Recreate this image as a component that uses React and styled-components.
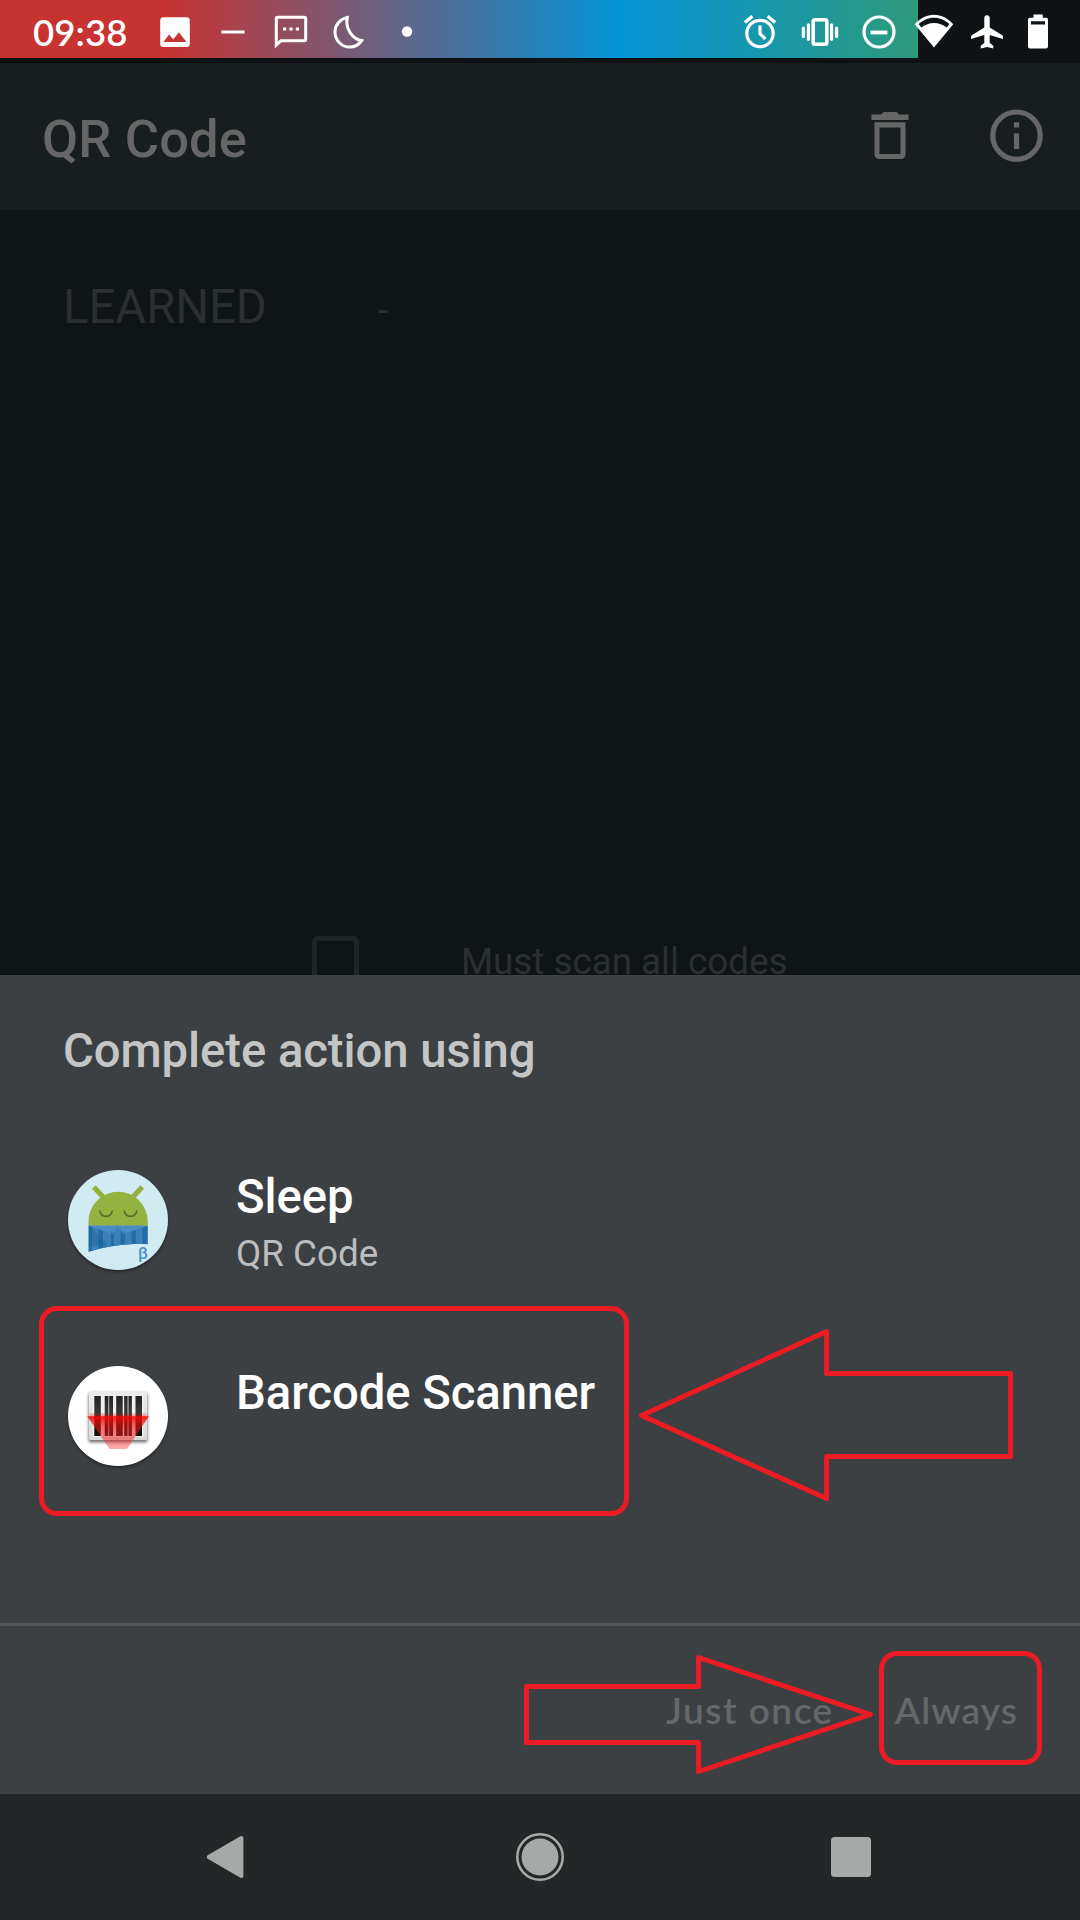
import React from 'react';
import styled, { createGlobalStyle } from 'styled-components';

const RED = '#ed1c24';

const GlobalStyle = createGlobalStyle`
  * { box-sizing: border-box; }
  body {
    margin: 0;
    background: #0f1417;
    font-family: Roboto, "Noto Sans", sans-serif;
  }
`;

const Screen = styled.div`
  position: relative;
  display: flex;
  flex-direction: column;
  width: 1080px;
  height: 1920px;
  overflow: hidden;
  background: #0f1417;
`;

const StatusBar = styled.header`
  display: flex;
  align-items: flex-start;
  height: 63px;
  color: #fff;
  background: linear-gradient(90deg, #c73331 165px, #0494d9 619px, #2d9a7b 918px) 0 0 / 918px 58px no-repeat #0f1214;
`;

const Clock = styled.time`
  width: 146px;
  padding-left: 33px;
  font: 600 36.5px/64px Lato, sans-serif;
  letter-spacing: 0.1px;
`;

const StatusGroup = styled.div`
  display: flex;
  margin-left: ${(p) => (p.$end ? 'auto' : '0')};
  padding-right: ${(p) => (p.$end ? '19.75px' : '0')};
`;

const Slot = styled.span`
  display: flex;
  align-items: center;
  justify-content: center;
  width: ${(p) => p.$w}px;
  height: 63px;
`;

const Glyph = styled.svg`
  display: block;
  flex: none;
  width: ${(p) => p.$w || 40}px;
  height: ${(p) => p.$h || p.$w || 40}px;
  overflow: visible;
`;

const AppBar = styled.div`
  display: flex;
  align-items: center;
  height: 147px;
  padding: 4px 37px 0 42px;
  color: #666;
  background: #181d20;
`;

const Title = styled.h1`
  flex: 1;
  margin: 0;
  font-size: 52.5px;
  font-weight: 500;
  line-height: 62px;
  letter-spacing: 0.15px;
`;

const Actions = styled.div`
  display: flex;
  gap: 81px;
  padding-bottom: 6px;
`;

const Body = styled.main`
  height: 765px;
  padding-top: 69px;
  overflow: hidden;
  color: #2b2f32;
`;

const LearnedRow = styled.div`
  display: flex;
  align-items: baseline;
  height: 56px;
  padding-left: 63px;
`;

const Learned = styled.span`
  width: 315px;
  font-size: 47.25px;
  line-height: 56px;
`;

const Small = styled.span`
  font-size: 36.75px;
  line-height: 44px;
`;

const CheckRow = styled.label`
  display: flex;
  gap: 102px;
  margin-top: 601px;
  padding-left: 312px;
`;

const CheckBox = styled.span`
  width: 47px;
  height: 48px;
  border: 5px solid #1f2427;
  border-radius: 6px;
`;

const CheckLabel = styled(Small)`
  padding-top: 4px;
`;

const Sheet = styled.section`
  display: flex;
  flex-direction: column;
  height: 819px;
  padding-top: 48px;
  background: #3d4043;
`;

const SheetTitle = styled.h2`
  margin: 0 0 43px 63px;
  color: #c4c5c5;
  font-size: 47.25px;
  font-weight: 500;
  line-height: 56px;
  letter-spacing: -0.07px;
`;

const AppRow = styled.div`
  display: flex;
  gap: 68px;
  height: 196px;
  padding: 47px 0 0 68px;
`;

const AppIcon = styled.div`
  width: 100px;
  height: 100px;
  margin-top: 1px;
  border-radius: 50%;
  overflow: hidden;
  background: ${(p) => p.$bg};
  box-shadow: 0 2px 3px rgba(0, 0, 0, 0.4);
`;

const AppText = styled.div`
  display: flex;
  flex-direction: column;
  gap: 7px;
`;

const AppName = styled.span`
  color: #fff;
  font-size: 47.25px;
  font-weight: 500;
  line-height: 56px;
  letter-spacing: -0.07px;
`;

const AppDetail = styled(Small)`
  color: #bcbdbf;
`;

const SheetFooter = styled.div`
  display: flex;
  justify-content: flex-end;
  gap: 61px;
  height: 171px;
  margin-top: auto;
  padding: 61px 62px 0 0;
  border-top: 3px solid #53575b;
`;

const TextButton = styled.button`
  height: 44px;
  padding: 0;
  border: 0;
  background: none;
  color: #64686b;
  font: 600 37px/45px Lato, sans-serif;
  letter-spacing: ${(p) => p.$track}px;
`;

const NavBar = styled.nav`
  display: flex;
  align-items: center;
  justify-content: space-between;
  height: 126px;
  padding: 0 205px;
  background: #242728;
  color: #a7a9a8;
`;

const MarkBox = styled.div`
  position: absolute;
  left: ${(p) => p.$x}px;
  top: ${(p) => p.$y}px;
  width: ${(p) => p.$w}px;
  height: ${(p) => p.$h}px;
  border: 5px solid ${RED};
  border-radius: 18px;
`;

const MarkArrow = styled.svg`
  position: absolute;
  left: ${(p) => p.$x}px;
  top: ${(p) => p.$y}px;
  fill: none;
  stroke: ${RED};
  stroke-width: 5;
  stroke-linejoin: round;
`;

/* Status glyphs use a 40px box whose centre is (20, 20). */
const ImageGlyph = () => (
  <Glyph viewBox="0 0 40 40">
    <path fill="currentColor" fillRule="evenodd" d="M8.500 5.200h23a3.300 3.300 0 0 1 3.300 3.300v23.200a3.300 3.300 0 0 1-3.300 3.300h-23a3.300 3.300 0 0 1-3.300-3.300V8.500a3.300 3.300 0 0 1 3.300-3.300zM8.500 30h23l-7.600-9.800-5.700 7.300-4.100-5z" />
  </Glyph>
);
const DashGlyph = () => (
  <Glyph viewBox="0 0 40 40"><rect x="8.400" y="18.500" width="23.200" height="3" fill="currentColor" /></Glyph>
);
const SmsGlyph = () => (
  <Glyph viewBox="0 0 40 40">
    <path fill="currentColor" fillRule="evenodd" d="M6.800 3.700h26.400a3 3 0 0 1 3 3v20.500a3 3 0 0 1-3 3H10.500L3.800 36.500V6.700a3 3 0 0 1 3-3zM6.800 6.700V29.500L9.500 27.200H33.200V6.700z" />
    <path fill="currentColor" d="M12 15.400h3.200v3.200H12zM18.400 15.400h3.200v3.200h-3.200zM24.800 15.400H28v3.200h-3.200z" />
  </Glyph>
);
const MoonGlyph = () => (
  <Glyph viewBox="0 0 40 40">
    <path fill="none" stroke="currentColor" strokeWidth="3" strokeLinejoin="miter" d="M18.300 5.400C10.800 7.200 6 13 6 20c0 8.500 6.700 15 14.800 15 5 0 9.300-2.600 11.800-6.400C23.500 27 15.800 16.500 18.300 5.400z" />
  </Glyph>
);
const DotGlyph = () => (
  <Glyph viewBox="0 0 40 40"><circle cx="20" cy="19.500" r="5.200" fill="currentColor" /></Glyph>
);
const AlarmGlyph = () => (
  <Glyph viewBox="0 0 40 40" fill="none" stroke="currentColor" strokeWidth="3.200">
    <circle cx="20" cy="21.500" r="13.200" />
    <path d="M20 13.500v8.300l5.400 5.200" />
    <path d="M4.900 10.500l7.500-6.300M27.600 4.200l7.500 6.300" strokeWidth="3.400" />
  </Glyph>
);
const VibrateGlyph = () => (
  <Glyph viewBox="0 0 40 40">
    <rect x="13.200" y="7.700" width="13.600" height="24.600" rx="1.800" fill="none" stroke="currentColor" strokeWidth="3.600" />
    <path stroke="currentColor" strokeWidth="3.200" strokeLinecap="round" d="M3.400 16v8.500M8.400 12.800v14.500M31.600 12.800v14.500M36.600 16v8.500" />
  </Glyph>
);
const DndGlyph = () => (
  <Glyph viewBox="0 0 40 40" fill="none" stroke="currentColor">
    <circle cx="20" cy="20" r="15" strokeWidth="3.200" />
    <path d="M11.600 20.500h16.800" strokeWidth="3.800" />
  </Glyph>
);
const WifiGlyph = () => (
  <Glyph viewBox="0 0 40 40">
    <path fill="currentColor" fillRule="evenodd" d="M20 35.500L.8 12.200C6 6.500 12.500 2.800 20 2.800s14 3.700 19.200 9.400zM20 5.700c-6 0-11.200 2.600-15.400 6.400l2.700 3.300C11.200 12.500 15.300 10.900 20 10.900s8.800 1.600 12.700 4.500l2.700-3.300C31.200 8.300 26 5.700 20 5.700z" />
  </Glyph>
);
const PlaneGlyph = () => (
  <Glyph viewBox="0 0 40 40">
    <path fill="currentColor" d="M20 3.300c1.700 0 2.700 1.300 2.700 3v9.200l12.500 7.800c.5.300.8.900.8 1.500v2.200l-13.300-4V31l3 2.200c.4.300.6.700.6 1.200V36.500L20 35l-6.300 1.500v-2.100c0-.5.200-.9.600-1.200l3-2.200v-8L4 27v-2.200c0-.6.300-1.200.8-1.500l12.500-7.800V6.300c0-1.700 1-3 2.700-3z" />
  </Glyph>
);
const BatteryGlyph = () => (
  <Glyph viewBox="0 0 40 40">
    <path fill="currentColor" fillRule="evenodd" d="M15.500 2.500h9.200v3.200h3.300a2 2 0 0 1 2 2v26.800a2 2 0 0 1-2 2H12a2 2 0 0 1-2-2V7.700a2 2 0 0 1 2-2h3.500zM13 9.200v3.400h14V9.200z" />
  </Glyph>
);

const TrashIcon = () => (
  <Glyph $w={38} $h={54} viewBox="0 0 38 54">
    <path fill="currentColor" fillRule="evenodd" d="M10 5.500L12.800 3h12.500L28 5.500h9.500v5.500H.5V5.500zM3.500 13.300h31v32.200a4.500 4.500 0 0 1-4.500 4.500H8a4.500 4.500 0 0 1-4.500-4.500zM8.500 18.500v26.400h21V18.500z" />
  </Glyph>
);
const InfoIcon = () => (
  <Glyph $w={53} $h={54} viewBox="0 0 53 54">
    <circle cx="26.500" cy="26.700" r="23.700" fill="none" stroke="currentColor" strokeWidth="5.200" />
    <path fill="currentColor" d="M23.900 13.200h5.200v5.300h-5.200zM23.900 24.200h5.200v15.700h-5.200z" />
  </Glyph>
);

const STRIPES = [28, 39, 50, 61, 72];

const SleepLogo = () => (
  <Glyph $w={100} viewBox="0 0 100 100">
    <defs>
      <clipPath id="blanket"><path d="M20.500 55.700h59.300v18.500C59 73.500 39 76 20.500 82z" /></clipPath>
    </defs>
    <path d="M25.800 17l10 10.800M74.200 17l-10 10.800" stroke="#93b13f" strokeWidth="5" />
    <path d="M20.500 55.700V51.500a29.650 29.650 0 0 1 59.300 0v4.200z" fill="#94b23f" />
    <g fill="none" stroke="#56692a" strokeWidth="1.500">
      <path d="M31.500 40.500c2 7.800 11 7.800 13 0M56 40.500c2 7.800 11 7.800 13 0" />
    </g>
    <g clipPath="url(#blanket)">
      <rect x="20" y="55" width="60" height="28" fill="#226ca8" />
      {STRIPES.map((x, i) => (
        <rect key={x} x={x - 4} y="55" width={i === 1 ? 8 : 6.5} height="28" fill="#3a80b9" />
      ))}
      <path d="M22 55.700L40 76H20.500z" fill="#1f6296" opacity=".45" />
      <path d="M20.500 55.700h59.300L55.500 64 50 56.500 44.500 64z" fill="#4b8dc3" />
      <circle cx="43.700" cy="62" r=".8" fill="#25659b" /><circle cx="56.300" cy="62" r=".8" fill="#25659b" />
    </g>
    <text x="70" y="88.500" fontFamily="Roboto, sans-serif" fontSize="16.500" fontWeight="500" fill="#4b8fc4">β</text>
  </Glyph>
);

const BARS = [
  [26.3, 6.500], [36.8, 3.200], [41.3, 3.700], [48.2, 6.500], [56.3, 3], [60.8, 3], [67.5, 6.500],
];

const BarcodeLogo = () => (
  <Glyph $w={100} viewBox="0 0 100 100">
    <defs>
      <linearGradient id="plate" x1="0" y1="0" x2="0" y2="1">
        <stop offset="0" stopColor="#ebebeb" /><stop offset="1" stopColor="#d8d8d8" />
      </linearGradient>
      <linearGradient id="bar" x1="0" y1="0" x2="0" y2="1">
        <stop offset="0" stopColor="#222" /><stop offset=".4" stopColor="#3a3a3a" /><stop offset=".5" stopColor="#161616" /><stop offset="1" stopColor="#101010" />
      </linearGradient>
      <linearGradient id="beam" x1="0" y1="0" x2="0" y2="1">
        <stop offset="0" stopColor="#f80808" stopOpacity=".92" /><stop offset=".3" stopColor="#f00c0c" stopOpacity=".6" /><stop offset="1" stopColor="#ff3030" stopOpacity=".4" />
      </linearGradient>
      <filter id="soft" x="-20%" y="-20%" width="140%" height="140%"><feGaussianBlur stdDeviation="1.500" /></filter>
    </defs>
    <rect x="20.500" y="27" width="59" height="49.500" rx="2" fill="#555" opacity=".8" filter="url(#soft)" />
    <rect x="21" y="26" width="58" height="48" rx="1.500" fill="url(#plate)" />
    <rect x="24.500" y="29" width="51" height="42" fill="#efefef" />
    <rect x="36.800" y="30" width="8" height="40" fill="#999" />
    <rect x="56.300" y="30" width="7.500" height="40" fill="#999" />
    {BARS.map(([x, w]) => <rect key={x} x={x} y="30" width={w} height="40" fill="url(#bar)" />)}
    <rect x="21" y="48" width="58" height="3" fill="#f33" opacity=".55" filter="url(#soft)" />
    <path d="M19.300 50.200h61.600L59 83H41.500z" fill="url(#beam)" />
  </Glyph>
);

const BackIcon = () => (
  <Glyph $w={48} viewBox="0 0 48 48"><path fill="currentColor" stroke="currentColor" strokeWidth="4" strokeLinejoin="round" d="M36.400 5v38L3.700 24z" /></Glyph>
);
const HomeIcon = () => (
  <Glyph $w={48} viewBox="0 0 48 48">
    <circle cx="24" cy="24" r="22.700" fill="none" stroke="currentColor" strokeWidth="2.600" />
    <circle cx="24" cy="24" r="18.500" fill="currentColor" />
  </Glyph>
);
const RecentsIcon = () => (
  <Glyph $w={48} viewBox="0 0 48 48"><rect x="4" y="4" width="40" height="40" rx="3.500" fill="currentColor" /></Glyph>
);

const NOTIFICATIONS = [ImageGlyph, DashGlyph, SmsGlyph, MoonGlyph, DotGlyph];
const SYSTEM = [
  [AlarmGlyph, 59.5], [VibrateGlyph, 59.5], [DndGlyph, 59.5],
  [WifiGlyph, 50.5], [PlaneGlyph, 55.5], [BatteryGlyph, 45.5],
];

export default function App() {
  return (
    <>
      <GlobalStyle />
      <Screen>
        <StatusBar>
          <Clock>09:38</Clock>
          <StatusGroup>
            {NOTIFICATIONS.map((Icon, i) => <Slot key={i} $w={57.9}><Icon /></Slot>)}
          </StatusGroup>
          <StatusGroup $end>
            {SYSTEM.map(([Icon, w], i) => <Slot key={i} $w={w}><Icon /></Slot>)}
          </StatusGroup>
        </StatusBar>
        <AppBar>
          <Title>QR Code</Title>
          <Actions><TrashIcon /><InfoIcon /></Actions>
        </AppBar>
        <Body>
          <LearnedRow>
            <Learned>LEARNED</Learned>
            <Small>-</Small>
          </LearnedRow>
          <CheckRow>
            <CheckBox />
            <CheckLabel>Must scan all codes</CheckLabel>
          </CheckRow>
        </Body>
        <Sheet>
          <SheetTitle>Complete action using</SheetTitle>
          <AppRow>
            <AppIcon $bg="#d0ebf1"><SleepLogo /></AppIcon>
            <AppText>
              <AppName>Sleep</AppName>
              <AppDetail>QR Code</AppDetail>
            </AppText>
          </AppRow>
          <AppRow>
            <AppIcon $bg="#fff"><BarcodeLogo /></AppIcon>
            <AppText>
              <AppName>Barcode Scanner</AppName>
            </AppText>
          </AppRow>
          <SheetFooter>
            <TextButton $track={1.5}>Just once</TextButton>
            <TextButton $track={1.1}>Always</TextButton>
          </SheetFooter>
        </Sheet>
        <NavBar>
          <BackIcon />
          <HomeIcon />
          <RecentsIcon />
        </NavBar>
        <MarkBox $x={39} $y={1306} $w={590} $h={210} />
        <MarkBox $x={879} $y={1651} $w={163} $h={114} />
        <MarkArrow $x={636} $y={1326} width="380" height="178">
          <path d="M5.500 89.500L190.500 5.500V47.500H374.500V130.500H190.500V172.500z" />
        </MarkArrow>
        <MarkArrow $x={520} $y={1652} width="356" height="126">
          <path d="M350.500 62.500L178.500 5.500V34.500H6.500V90.500H178.500V119.500z" />
        </MarkArrow>
      </Screen>
    </>
  );
}
